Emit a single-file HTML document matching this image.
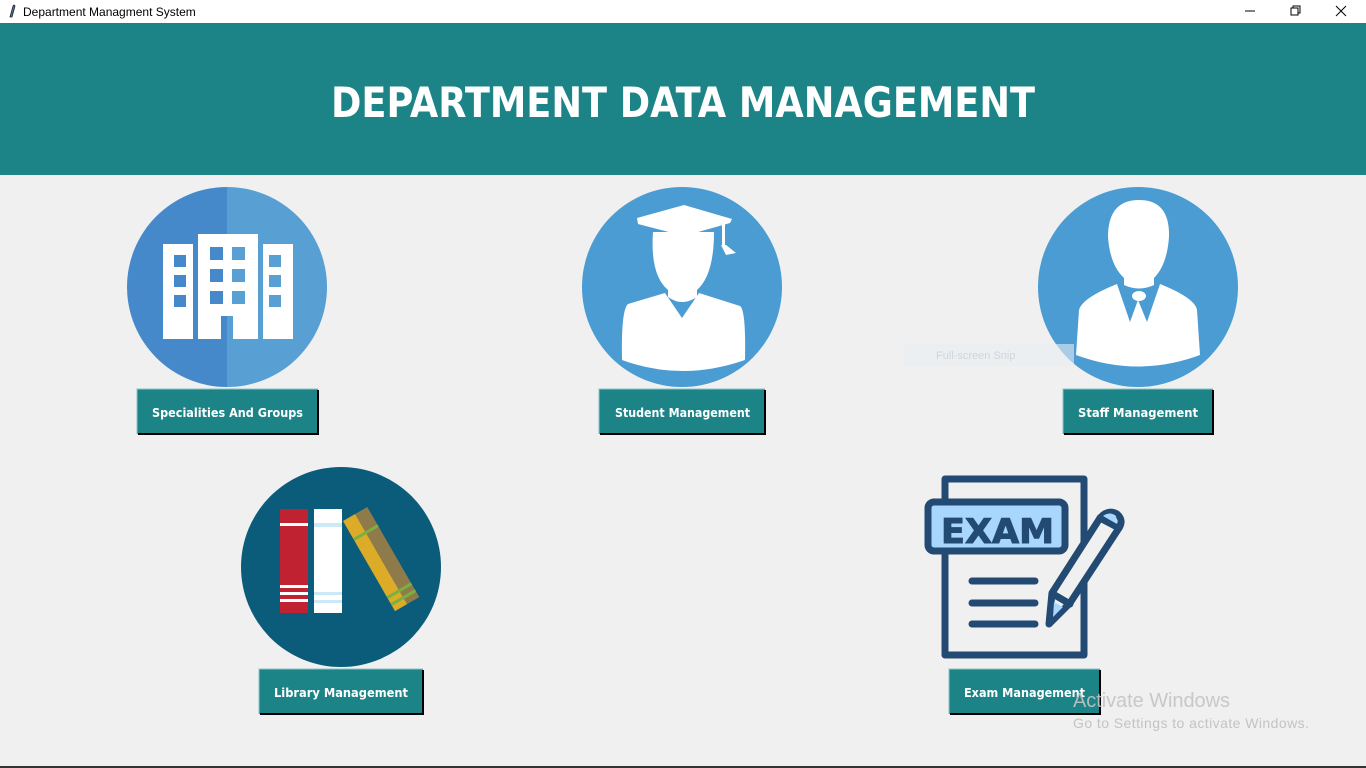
<!DOCTYPE html>
<html><head><meta charset="utf-8"><style>
html,body{margin:0;padding:0;width:1366px;height:768px;overflow:hidden;background:#f0f0f0;font-family:"Liberation Sans",sans-serif}
svg{position:absolute;left:0;top:0}
</style></head><body>
<svg width="1366" height="768" viewBox="0 0 1366 768" xmlns="http://www.w3.org/2000/svg">
<rect x="0" y="0" width="1366" height="23" fill="#fff"/>
<path d="M10 17 L13 6 Q14 4 15 6 L12 17 Z" fill="#4a6fa5" stroke="#223" stroke-width="0.8"/>
<text x="23" y="16" font-family="Liberation Sans" font-size="12" fill="#000">Department Managment System</text>
<line x1="1245" y1="11" x2="1255" y2="11" stroke="#000" stroke-width="1"/>
<rect x="1291" y="8" width="7" height="7" fill="none" stroke="#000"/>
<path d="M1293 8 V6 H1300 V13 H1298" fill="none" stroke="#000"/>
<path d="M1336 6 L1346 16 M1346 6 L1336 16" stroke="#000" stroke-width="1"/>
<rect x="0" y="23" width="1366" height="152" fill="#1c8487"/>
<text x="331" y="117" font-family="DejaVu Sans" font-weight="bold" font-size="42" fill="#fff" textLength="704" lengthAdjust="spacingAndGlyphs">DEPARTMENT DATA MANAGEMENT</text>

<clipPath id="c1"><circle cx="227" cy="287" r="100"/></clipPath>
<g clip-path="url(#c1)"><rect x="127" y="187" width="100" height="200" fill="#4689cb"/><rect x="227" y="187" width="100" height="200" fill="#589fd4"/></g>
<g fill="#fff">
<rect x="163" y="244" width="30" height="95"/>
<rect x="198" y="234" width="60" height="105"/>
<rect x="263" y="244" width="30" height="95"/>
</g>
<g fill="#4689cb">
<rect x="174" y="255" width="12" height="12"/><rect x="174" y="275" width="12" height="12"/><rect x="174" y="295" width="12" height="12"/>
<rect x="210" y="247" width="13" height="13"/><rect x="210" y="269" width="13" height="13"/><rect x="210" y="291" width="13" height="13"/>
<rect x="193" y="318" width="5" height="21"/><rect x="221" y="316" width="12" height="23"/>
</g>
<g fill="#589fd4">
<rect x="232" y="247" width="13" height="13"/><rect x="232" y="269" width="13" height="13"/><rect x="232" y="291" width="13" height="13"/>
<rect x="269" y="255" width="12" height="12"/><rect x="269" y="275" width="12" height="12"/><rect x="269" y="295" width="12" height="12"/>
<rect x="258" y="318" width="5" height="21"/><rect x="227" y="316" width="6" height="23"/>
</g>

<circle cx="682" cy="287" r="100" fill="#4b9cd3"/>
<g fill="#fff">
<path d="M653 232 Q650 275 668 290 L668 297 Q682 307 697 297 L697 290 Q714 275 714 232 Z"/>
<path d="M665 293 L682 318 L699 293 L740 306 Q746 310 745 360 Q682 382 622 360 Q621 310 628 304 Z"/>
<path d="M637 218 L684 205 L732 219 L730 223 L684 236 L638 224 Z"/>
<rect x="722" y="221" width="3" height="24"/>
<path d="M721 245 L726 245 L736 253 L726 255 Z"/>
</g>

<circle cx="1138" cy="287" r="100" fill="#4b9cd3"/>
<g fill="#fff">
<path d="M1139 200 Q1170 200 1169 237 Q1167 265 1154 278 L1154 285 Q1139 292 1124 285 L1124 278 Q1110 265 1108 237 Q1108 200 1139 200 Z"/>
<path d="M1117 284 L1130 322 L1138 300 L1147 322 L1160 284 Q1195 298 1197 310 L1200 355 Q1138 378 1076 355 L1079 310 Q1082 298 1117 284 Z"/>
<ellipse cx="1139" cy="296" rx="7" ry="5"/>
</g>

<circle cx="341" cy="567" r="100" fill="#0a5c7a"/>
<rect x="280" y="509" width="28" height="104" fill="#c02232"/>
<g fill="#fff"><rect x="280" y="523" width="28" height="3"/><rect x="280" y="585" width="28" height="3"/><rect x="280" y="592" width="28" height="3"/><rect x="280" y="599" width="28" height="3"/></g>
<rect x="314" y="509" width="28" height="104" fill="#fff"/>
<g fill="#cde8f7"><rect x="314" y="523" width="28" height="4"/><rect x="314" y="592" width="28" height="3"/><rect x="314" y="600" width="28" height="3"/></g>
<g transform="rotate(-30 343 521)">
<rect x="343" y="521" width="14" height="104" fill="#dcab28"/>
<rect x="357" y="521" width="14" height="104" fill="#8f7a4a"/>
<rect x="343" y="541" width="28" height="3" fill="#79b040"/>
<rect x="343" y="608" width="28" height="3" fill="#79b040"/>
<rect x="343" y="616" width="28" height="3" fill="#79b040"/>
</g>

<g stroke="#234a72" stroke-width="7" stroke-linejoin="round" stroke-linecap="round" fill="none">
<rect x="945" y="479" width="139" height="176" fill="#f0f0f0"/>
<rect x="928" y="502" width="137" height="49" rx="6" fill="#a8d6fd"/>
<path d="M972 581 H1035 M972 603 H1035 M972 624 H1035"/>
<path d="M1100 518 Q1108 509 1117 514 Q1124 520 1119 528 L1070 603 L1049 624 L1052 593 Z" fill="#f0f0f0"/>
<path d="M1100 518 L1119 528"/>
<path d="M1053 594 L1070 604"/>
</g>
<path d="M1103 516 Q1110 511 1116 516 L1117 524 Z" fill="#a8d6fd"/>
<path d="M1054 602 L1063 607 L1053 617 Z" fill="#a8d6fd"/>
<text x="941" y="543" font-family="DejaVu Sans" font-weight="bold" font-size="34" fill="#234a72" stroke="#234a72" stroke-width="1" textLength="113" lengthAdjust="spacingAndGlyphs">EXAM</text>

<g font-family="DejaVu Sans" font-weight="bold" font-size="12" fill="#fff">
<g><rect x="137" y="389" width="181" height="45" fill="#1c8487"/><path d="M137 434 V389 H318" stroke="#8ec4c6" fill="none"/><path d="M138 434 H318 V390" stroke="#000" stroke-width="2" fill="none"/>
<text x="152" y="417" textLength="151" lengthAdjust="spacingAndGlyphs">Specialities And Groups</text></g>
<g><rect x="599" y="389" width="166" height="45" fill="#1c8487"/><path d="M599 434 V389 H765" stroke="#8ec4c6" fill="none"/><path d="M600 434 H765 V390" stroke="#000" stroke-width="2" fill="none"/>
<text x="615" y="417" textLength="135" lengthAdjust="spacingAndGlyphs">Student Management</text></g>
<g><rect x="1063" y="389" width="150" height="45" fill="#1c8487"/><path d="M1063 434 V389 H1213" stroke="#8ec4c6" fill="none"/><path d="M1064 434 H1213 V390" stroke="#000" stroke-width="2" fill="none"/>
<text x="1078" y="417" textLength="120" lengthAdjust="spacingAndGlyphs">Staff Management</text></g>
<g><rect x="259" y="669" width="164" height="45" fill="#1c8487"/><path d="M259 714 V669 H423" stroke="#8ec4c6" fill="none"/><path d="M260 714 H423 V670" stroke="#000" stroke-width="2" fill="none"/>
<text x="274" y="697" textLength="134" lengthAdjust="spacingAndGlyphs">Library Management</text></g>
<g><rect x="949" y="669" width="151" height="45" fill="#1c8487"/><path d="M949 714 V669 H1100" stroke="#8ec4c6" fill="none"/><path d="M950 714 H1100 V670" stroke="#000" stroke-width="2" fill="none"/>
<text x="964" y="697" textLength="121" lengthAdjust="spacingAndGlyphs">Exam Management</text></g>
</g>

<rect x="904" y="344" width="170" height="22" fill="#e8eef3" fill-opacity="0.6"/>
<text x="936" y="359" font-family="Liberation Sans" font-size="11" fill="#d0d5da">Full-screen Snip</text>
<text x="1073" y="707" font-family="Liberation Sans" font-size="20" fill="#c3c3c3" fill-opacity="0.9" textLength="157">Activate Windows</text>
<text x="1073" y="728" font-family="Liberation Sans" font-size="14" fill="#c3c3c3" textLength="236">Go to Settings to activate Windows.</text>
<rect x="0" y="766" width="1366" height="2" fill="#333"/>
</svg>
</body></html>
